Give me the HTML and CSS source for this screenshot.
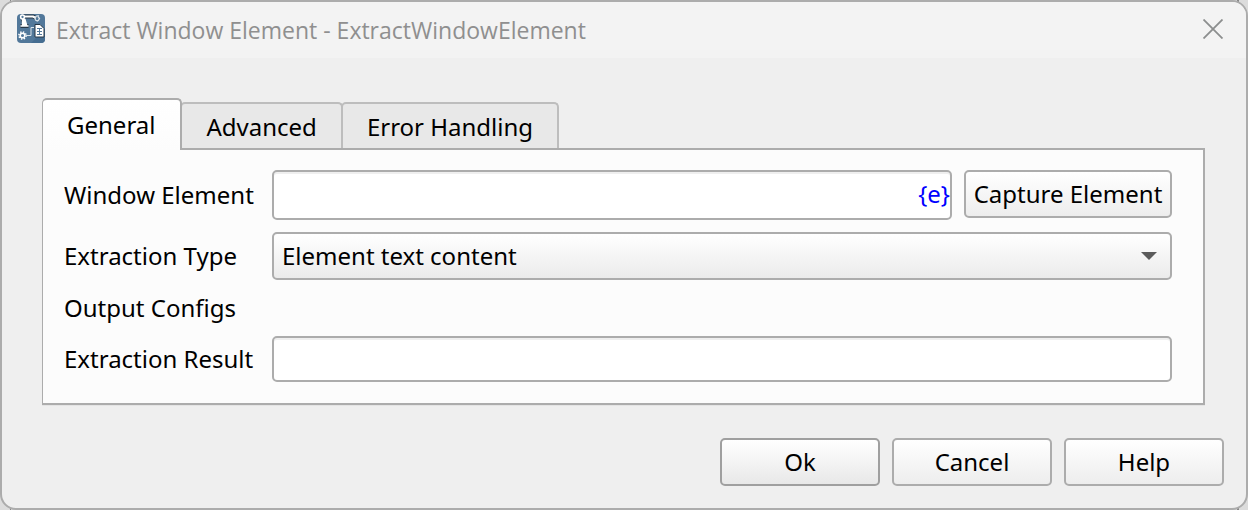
FILE: index.html
```html
<!DOCTYPE html>
<html lang="en">
<head>
<meta charset="utf-8">
<title>Extract Window Element</title>
<link rel="stylesheet" href="styles.css">
</head>
<body>
<main class="dialog">
  <header class="titlebar">
    <svg class="app-icon" viewBox="0 0 28 29" aria-hidden="true">
      <rect width="28" height="29" rx="4" fill="#52789a"/>
      <path d="M14 29 28 15v10a4 4 0 0 1-4 4z" fill="#456d91"/>
      <path d="M5.500 4 7 9M3.500 12h8M6 2.500h10l3 1.500" fill="none" stroke="#263746" stroke-width="4"/>
      <path d="M3.500 12h8M5.500 10.500V5.500h2.500l1.500 5z" fill="#fff" stroke="#fff" stroke-width="1.300"/>
      <path d="M7 2.500h9l3 1.500" fill="none" stroke="#fff" stroke-width="2.200"/>
      <circle cx="5.500" cy="3" r="1.900" fill="#52789a" stroke="#fff" stroke-width="1.500"/>
      <path d="M22 2c-4-1-5 3-3 4.500l2 .5M21 2.500l1.500 2L21 7" fill="none" stroke="#d8e1e8" stroke-width="1.300"/>
      <circle cx="5.500" cy="21.500" r="3.600" fill="none" stroke="#fff" stroke-width="1.500" stroke-dasharray="1.400 1.427"/>
      <circle cx="5.500" cy="21.500" r="2.300" fill="#52789a" stroke="#fff" stroke-width="1.600"/>
      <path d="M9 21.500h5v-8h3" fill="none" stroke="#dce5ec"/>
      <path d="M18 10.500h5l4 4v8.500h-9z" fill="#fff" stroke="#263746"/>
      <path d="M20 14.500h5M20 17.500h5M20 20.500h5M22.500 14v7" stroke="#52789a"/>
    </svg>
    <h1 class="title">Extract Window Element - ExtractWindowElement</h1>
    <button class="close" type="button" aria-label="Close">
      <svg class="close-icon" viewBox="0 0 20 20" aria-hidden="true"><path d="M.5.5l19 19M19.5.5l-19 19" stroke="#8c8e8e" stroke-width="1.8"/></svg>
    </button>
  </header>
  <form class="content">
    <div class="tabs" role="tablist">
      <button class="tab active" type="button" role="tab" aria-selected="true" id="general">General</button>
      <button class="tab" type="button" role="tab" aria-selected="false">Advanced</button>
      <button class="tab" type="button" role="tab" aria-selected="false">Error Handling</button>
    </div>
    <section class="panel" role="tabpanel" aria-labelledby="general">
      <label class="label" for="element">Window Element</label>
      <div class="element-row">
        <div class="field">
          <input class="input tall" id="element" type="text">
          <span class="token">{e}</span>
        </div>
        <button class="button capture" type="button">Capture Element</button>
      </div>
      <label class="label" for="type">Extraction Type</label>
      <div class="field">
        <select class="select" id="type"><option>Element text content</option></select>
        <svg class="arrow" viewBox="0 0 16 8" aria-hidden="true"><path d="M0 0h16L8 8z" fill="#5b5b5b"/></svg>
      </div>
      <span class="label section">Output Configs</span>
      <label class="label" for="result">Extraction Result</label>
      <input class="input" id="result" type="text">
    </section>
    <footer class="actions">
      <button class="button action default" type="button">Ok</button>
      <button class="button action" type="button">Cancel</button>
      <button class="button action" type="button">Help</button>
    </footer>
  </form>
</main>
</body>
</html>
```
FILE: styles.css
```css
* { box-sizing: border-box; }
body {
  margin: 0;
  background:
    linear-gradient(#888, #888) 10px 0 / 1px 100% no-repeat,
    linear-gradient(#888, #888) right 9px top 0 / 2px 100% no-repeat,
    #dcdcdc;
  color: #000;
  font: 24px/32px "Noto Sans", "Open Sans", sans-serif;
}
button, input, select { font: inherit; color: inherit; }
.dialog {
  min-height: 100vh;
  border: 2px solid #acacac;
  border-radius: 16px;
  background: #efefef;
  overflow: hidden;
}
.titlebar {
  display: flex;
  align-items: center;
  height: 56px;
  padding: 0 23px 3px 15px;
  background: #f3f3f3;
}
.app-icon { width: 28px; height: 29px; }
.title {
  flex: 1;
  margin: 3px 0 0 11px;
  color: #8f8f8f;
  font-family: "Open Sans", "Noto Sans", sans-serif;
  font-size: 23px;
  font-weight: 400;
  white-space: nowrap;
}
.close { display: flex; padding: 0; border: 0; background: none; }
.close-icon { width: 20px; height: 20px; }
.content { padding: 40px 22px 22px 40px; }
.tabs { display: flex; align-items: flex-end; }
.tab {
  height: 46px;
  margin-left: -2px;
  padding: 2px 24px 0;
  border: 2px solid #bdbdbd;
  border-bottom: 0;
  border-radius: 5px 5px 0 0;
  background: #e8e8e8;
  white-space: nowrap;
}
.tab.active {
  z-index: 1;
  height: 52px;
  margin: 0 0 -2px;
  padding: 0 25px 0 24px;
  border-color: #acacac;
  border-left-width: 1px;
  background: linear-gradient(#fff, #fcfcfc);
}
.panel {
  display: grid;
  grid-template-columns: 196px 1fr;
  gap: 12px;
  align-items: center;
  margin-right: 19px;
  padding: 20px 31px 21px 21px;
  border: 2px solid #acacac;
  border-left-width: 1px;
  background: #fcfcfc;
  box-shadow: 0 1px #e4e4e4;
}
.label { white-space: nowrap; }
.section { grid-column: 1 / -1; }
.element-row { display: flex; gap: 12px; }
.field { position: relative; flex: 1; display: flex; }
.input, .select, .button {
  border: 2px solid #acacac;
  border-radius: 5px;
}
.input {
  width: 100%;
  height: 46px;
  padding: 0 10px;
  background: #fff;
  box-shadow: inset 0 2px #efefef;
}
.input.tall { height: 50px; padding-right: 36px; }
.token {
  position: absolute;
  top: 8px;
  right: 2px;
  color: #00f;
}
.select {
  width: 100%;
  height: 48px;
  padding: 0 36px 0 8px;
  appearance: none;
  background: linear-gradient(#fff, #ebebeb);
}
.arrow {
  position: absolute;
  top: 20px;
  right: 15px;
  width: 16px;
  height: 8px;
  pointer-events: none;
}
.button {
  height: 48px;
  padding: 0;
  background: linear-gradient(#fff, #ededed);
  white-space: nowrap;
}
.capture { width: 208px; }
.actions {
  display: flex;
  justify-content: flex-end;
  gap: 12px;
  margin-top: 33px;
}
.action { width: 160px; }
.action.default { border-color: #9f9f9f; background: linear-gradient(#fff, #e8e8e8); }
```
